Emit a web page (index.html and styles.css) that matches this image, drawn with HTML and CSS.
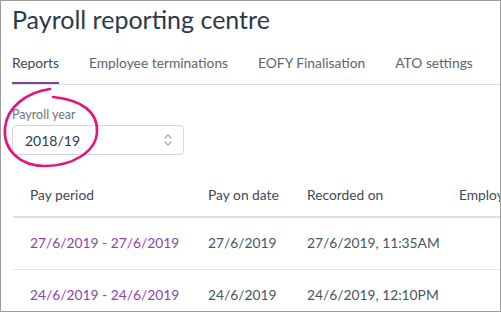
FILE: index.html
```html
<!DOCTYPE html>
<html lang="en">
<head>
    <meta charset="UTF-8">
    <meta name="viewport" content="width=device-width, initial-scale=1.0">
    <title>Payroll reporting centre</title>
    <link rel="stylesheet" href="styles.css">
</head>
<body>
    <div class="frame">
        <h1 class="title">Payroll reporting centre</h1>
        <nav class="tabs">
            <a class="tab active">Reports</a>
            <a class="tab">Employee terminations</a>
            <a class="tab">EOFY Finalisation</a>
            <a class="tab">ATO settings</a>
        </nav>

        <div class="field">
            <label class="field-label">Payroll year</label>
            <div class="select">
                <span>2018/19</span>
                <svg class="chevron" width="10" height="14" viewBox="0 0 10 14">
                    <path d="M2 5 L5 2 L8 5 M2 9 L5 12 L8 9" fill="none" stroke="#a3abb2" stroke-width="1.3" stroke-linecap="round" stroke-linejoin="round"/>
                </svg>
            </div>
        </div>

        <table class="pays">
            <colgroup>
                <col style="width: 178px">
                <col style="width: 99px">
                <col style="width: 152px">
                <col style="width: 160px">
            </colgroup>
            <thead>
                <tr>
                    <th>Pay period</th>
                    <th>Pay on date</th>
                    <th>Recorded on</th>
                    <th>Employees</th>
                </tr>
            </thead>
            <tbody>
                <tr>
                    <td><a class="link">27/6/2019 - 27/6/2019</a></td>
                    <td>27/6/2019</td>
                    <td>27/6/2019, 11:35AM</td>
                    <td></td>
                </tr>
                <tr>
                    <td><a class="link">24/6/2019 - 24/6/2019</a></td>
                    <td>24/6/2019</td>
                    <td>24/6/2019, 12:10PM</td>
                    <td></td>
                </tr>
            </tbody>
        </table>

        <!-- hand drawn highlight round the year picker -->
        <svg class="scribble" width="110" height="94" viewBox="0 0 110 94">
            <path d="M50 9 C 28 12, 7 26, 5 48 C 3 70, 20 86, 45 86 C 72 86, 96 72, 97 52 C 98 32, 82 20, 53 17" fill="none" stroke="#e2157b" stroke-width="2.6" stroke-linecap="round"/>
        </svg>
    </div>
</body>
</html>
```

FILE: styles.css
```css
body {
    margin: 0;
    font-family: Lato, "Noto Sans", sans-serif;
    background: #fff;
}
.frame {
    width: 501px;
    height: 312px;
    box-sizing: border-box;
    border: 1px solid #9c9c9c;
    overflow: hidden;
    position: relative;
}
.title {
    margin: 0;
    padding: 3px 0 0 11px;
    font-size: 25px;
    font-weight: 400;
    line-height: 30px;
    color: #2c3a49;
}
.tabs {
    display: flex;
    margin: 11px 0 0 11px;
    border-bottom: 1px solid #dcdfe2;
    height: 39px;
}
.tab {
    flex-shrink: 0;
    white-space: nowrap;
    font-size: 13.8px;
    color: #5b6670;
    margin-right: 30px;
    line-height: 36px;
    height: 38px;
}
.tab.active {
    color: #3c4956;
    border-bottom: 2px solid #8241aa;
    height: 37px;
}
.field {
    margin: 23px 0 0 11px;
}
.field-label {
    display: block;
    font-size: 12.5px;
    color: #6b757e;
    line-height: 14px;
}
.select {
    margin-top: 3px;
    width: 172px;
    height: 30px;
    box-sizing: border-box;
    border: 1px solid #d3d7db;
    border-radius: 4px;
    display: flex;
    align-items: center;
    justify-content: space-between;
    padding: 0 10px 0 12px;
    font-size: 14px;
    color: #2e3b48;
}
.scribble {
    position: absolute;
    left: -1px;
    top: 79px;
}
.pays {
    margin: 17px 0 0 12px;
    border-collapse: collapse;
    table-layout: fixed;
    width: 589px;
}
.pays th {
    text-align: left;
    font-weight: 400;
    font-size: 13.8px;
    color: #3e4a56;
    padding: 0 0 0 17px;
    height: 44px;
    border-bottom: 2px solid #dde1e4;
    white-space: nowrap;
}
.pays td {
    font-size: 13.8px;
    color: #4a5560;
    padding: 0 0 3px 17px;
    height: 48px;
    border-bottom: 1px solid #e1e4e7;
    white-space: nowrap;
}
.link {
    color: #8a45ad;
}
```
